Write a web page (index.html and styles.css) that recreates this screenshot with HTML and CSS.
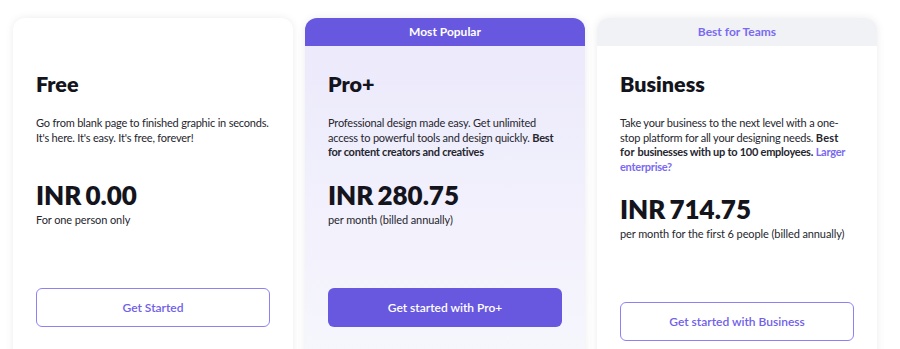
FILE: index.html
```html
<html>
	<head>
		<title>Plans</title>
		<link rel="stylesheet" href="styles.css">
	</head>
	<body>
		<div class="plans">
			<div class="card">
				<div class="badge badge-empty"></div>
				<div class="card-body">
					<h2 class="plan-name">Free</h2>
					<p class="plan-desc">Go from blank page to finished graphic in seconds. It's here. It's easy. It's free, forever!</p>
					<div class="price">INR<span class="amount">0.00</span></div>
					<p class="price-note">For one person only</p>
					<button class="btn btn-outline">Get Started</button>
				</div>
			</div>
			<div class="card card-popular">
				<div class="badge badge-popular">Most Popular</div>
				<div class="card-body">
					<h2 class="plan-name">Pro+</h2>
					<p class="plan-desc">Professional design made easy. Get unlimited access to powerful tools and design quickly. <b>Best for content creators and creatives</b></p>
					<div class="price">INR<span class="amount">280.75</span></div>
					<p class="price-note">per month (billed annually)</p>
					<button class="btn btn-solid">Get started with Pro+</button>
				</div>
			</div>
			<div class="card">
				<div class="badge badge-teams">Best for Teams</div>
				<div class="card-body">
					<h2 class="plan-name">Business</h2>
					<p class="plan-desc">Take your business to the next level with a one-stop platform for all your designing needs. <b class="wide">Best for</b> <b>businesses with up to 100 employees.</b> <a href="#">Larger enterprise?</a></p>
					<div class="price">INR<span class="amount">714.75</span></div>
					<p class="price-note">per month for the first 6 people (billed annually)</p>
					<button class="btn btn-outline">Get started with Business</button>
				</div>
			</div>
		</div>
	</body>
</html>
```
FILE: styles.css
```css
html{
	font-family: Lato, "Noto Sans", sans-serif;
}
body{
	margin: 0;
	background: #ffffff;
	color: #1d1d24;
}
.plans{
	display: flex;
	gap: 12px;
	padding: 18px 0 0 13px;
}
.card{
	width: 280px;
	height: 360px;
	flex: none;
	border-radius: 12px;
	overflow: hidden;
	background: #ffffff;
	box-shadow: 0 0 8px rgba(20, 20, 50, 0.08);
}
.card-popular{
	background: linear-gradient(#ebe9fb, #f7f7fd);
}
.badge{
	height: 28px;
	line-height: 28px;
	text-align: center;
	font-size: 12px;
	font-weight: 700;
}
.badge-popular{
	background: #6858e0;
	color: #ffffff;
}
.badge-teams{
	background: #f1f2f6;
	color: #7a6af2;
}
.card-body{
	padding: 25px 23px 0;
}
.plan-name{
	margin: 0;
	font-size: 21.5px;
	line-height: 26px;
	font-weight: 800;
	color: #14141c;
}
.plan-desc{
	margin: 19px 0 0;
	min-height: 43.5px;
	font-size: 11px;
	line-height: 14.5px;
	letter-spacing: -0.2px;
	color: #26262e;
}
.plan-desc b{
	font-weight: 700;
	letter-spacing: -0.25px;
}
.plan-desc b.wide{
	letter-spacing: 0.2px;
}
.plan-desc a{
	color: #7a6af2;
	font-weight: 700;
	letter-spacing: -0.25px;
	text-decoration: none;
}
.price{
	margin-top: 20px;
	font-size: 26px;
	line-height: 30px;
	font-weight: 800;
	color: #14141c;
}
.amount{
	margin-left: 4px;
}
.price-note{
	margin: 3px 0 0;
	font-size: 11px;
	line-height: 14px;
	letter-spacing: -0.1px;
	color: #26262e;
}
.btn{
	display: block;
	width: 234px;
	height: 39px;
	margin-top: 61px;
	border-radius: 6px;
	font-family: inherit;
	font-size: 12px;
	font-weight: 600;
	cursor: pointer;
}
.btn-outline{
	background: #ffffff;
	color: #6f60ea;
	border: 1px solid #8e82f2;
}
.btn-solid{
	background: #6858e0;
	color: #ffffff;
	border: none;
}
```
